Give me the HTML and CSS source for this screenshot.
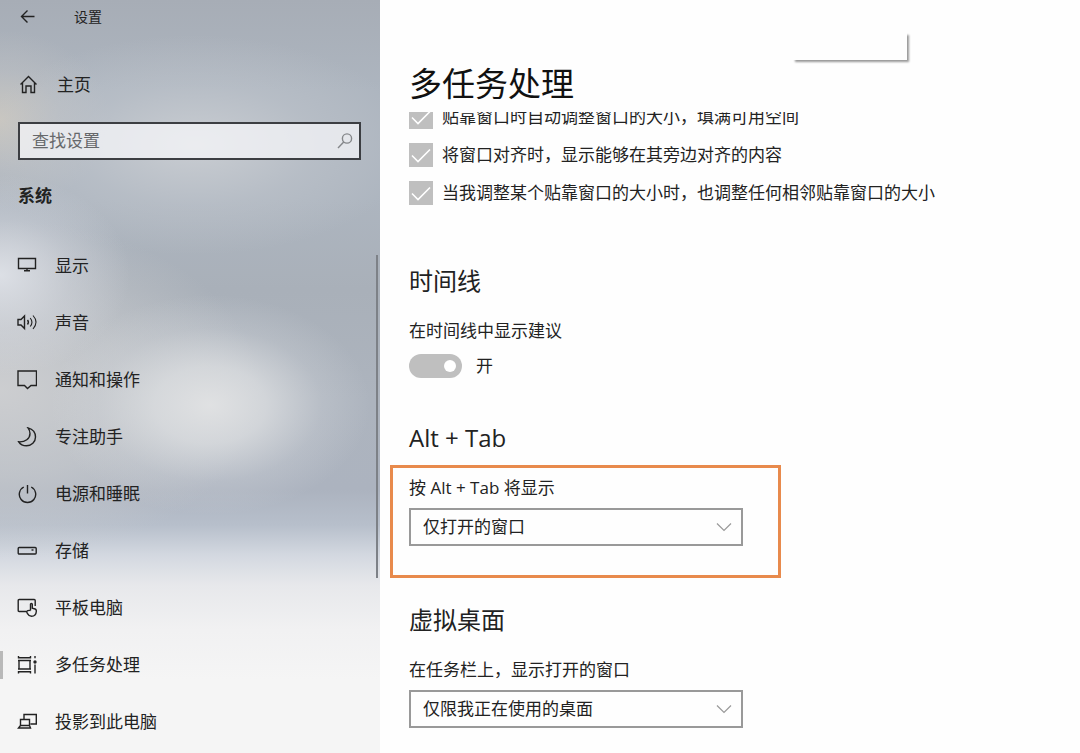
FILE: index.html
```html
<!DOCTYPE html>
<html lang="zh-CN">

<head>
  <meta charset="UTF-8">
  <meta name="viewport" content="width=device-width, initial-scale=1.0">
  <title>设置</title>
  <link rel="stylesheet" href="styles.css">
</head>

<body>
  <aside class="sidebar">
    <div class="titlebar">
      <button class="back-button" aria-label="返回">
        <svg class="icon" viewBox="0 0 20 20"><path d="M16.500 9.500H3.500M9.500 3.500l-6 6 6 6" /></svg>
      </button>
      <span class="titlebar-text">设置</span>
    </div>

    <a href="#" class="home-link">
      <svg class="icon" viewBox="0 0 20 20"><path d="M2.500 9.500L10.500 1.500l8 8M4.500 8v9.500H8V11h5v6.500h3.500V8" /></svg>
      <span>主页</span>
    </a>

    <div class="search-box">
      <input type="text" class="search-input" placeholder="查找设置" aria-label="查找设置">
      <svg class="search-icon" viewBox="0 0 18 18"><circle cx="12" cy="6.500" r="4.600" /><path d="M8.700 10L3 16" /></svg>
    </div>

    <h2 class="sidebar-title">系统</h2>

    <nav class="nav">
      <a href="#" class="nav-item">
        <svg class="icon" viewBox="0 0 20 20"><path d="M1.500 2.500h17v10h-17zM10 12.500v2M7 14.700h6" /></svg>
        <span>显示</span>
      </a>
      <a href="#" class="nav-item">
        <svg class="icon" viewBox="0 0 20 20"><path d="M1 6.500v5.500h3l3.500 3.500V3L4 6.500zM10.500 7q1.800 2.200 0 4.500" /><path class="thin" d="M13.200 5q3.500 4.200 0 8.500M16 2.500q6 6.500 0 13.500" /></svg>
        <span>声音</span>
      </a>
      <a href="#" class="nav-item">
        <svg class="icon" viewBox="0 0 20 20"><path d="M1 1h18.500v14.500H14L10.500 18.500 7.500 15.500H1z" /></svg>
        <span>通知和操作</span>
      </a>
      <a href="#" class="nav-item">
        <svg class="icon" viewBox="0 0 20 20"><path d="M11 .9c4.500 1.300 7.500 4.600 7.500 9.100 0 5-4 8.800-9 8.800-3.300 0-6.200-1.500-7.800-4 6.500.4 11.300-3 11.300-8.300 0-2.200-.8-4-2-5.600z" /></svg>
        <span>专注助手</span>
      </a>
      <a href="#" class="nav-item">
        <svg class="icon" viewBox="0 0 20 20"><path d="M6.800 3a8.200 8.200 0 1 0 7.400 0M10.500 1v8.500" /></svg>
        <span>电源和睡眠</span>
      </a>
      <a href="#" class="nav-item">
        <svg class="icon" viewBox="0 0 20 20"><rect x="1.200" y="6.500" width="18" height="6.500" rx="1" /><path d="M14.500 9h2" /></svg>
        <span>存储</span>
      </a>
      <a href="#" class="nav-item">
        <svg class="icon" viewBox="0 0 20 20"><path d="M9 13.500H2.200q-1 0-1-1v-10q0-1 1-1h15q1 0 1 1V8" /><path d="M13.500 12.500V6.200q.9-1.400 1.800 0v4l2.800.8q1.400.6 1.200 2.500-.3 4.800-4.800 4.800-2.600 0-4-2.600l-1-2.200q1.400-1.400 4-1" /></svg>
        <span>平板电脑</span>
      </a>
      <a href="#" class="nav-item active">
        <svg class="icon" viewBox="0 0 20 20"><path d="M2 5.500h11v8.500H2zM1.500 1v1.800h12V1M1.500 18.500v-1.800h12v1.800M18 1v2.200M18 9.500v9M1 5.500h13M1 14h13" /><circle class="dot" cx="18" cy="7" r="1" /></svg>
        <span>多任务处理</span>
      </a>
      <a href="#" class="nav-item">
        <svg class="icon" viewBox="0 0 20 20"><path d="M7 7V2.500h12.300v9.500H13.500M3.500 7.500h9v6h-9zM3.500 13.500L1.500 16h12l-1-2.500" /></svg>
        <span>投影到此电脑</span>
      </a>
    </nav>
    <div class="sidebar-scrollbar"></div>
  </aside>

  <main class="content">
    <h1 class="page-title">多任务处理</h1>
    <div class="popup-corner"></div>

    <div class="scroll-area">
      <div class="check-list">
        <label class="check-row">
          <input type="checkbox" checked>
          <span>贴靠窗口时自动调整窗口的大小，填满可用空间</span>
        </label>
        <label class="check-row">
          <input type="checkbox" checked>
          <span>将窗口对齐时，显示能够在其旁边对齐的内容</span>
        </label>
        <label class="check-row">
          <input type="checkbox" checked>
          <span>当我调整某个贴靠窗口的大小时，也调整任何相邻贴靠窗口的大小</span>
        </label>
      </div>

      <section class="section timeline">
        <h2>时间线</h2>
        <label class="setting-label" for="timelineToggle">在时间线中显示建议</label>
        <div class="toggle-row">
          <input type="checkbox" class="toggle" id="timelineToggle" checked>
          <span>开</span>
        </div>
      </section>

      <section class="section alt-tab">
        <h2>Alt + Tab</h2>
      </section>
      <div class="highlight">
        <label class="setting-label" for="altTab">按 Alt + Tab 将显示</label>
        <select id="altTab">
          <option>仅打开的窗口</option>
        </select>
      </div>

      <section class="section desktops">
        <h2>虚拟桌面</h2>
        <label class="setting-label" for="taskbarWindows">在任务栏上，显示打开的窗口</label>
        <select id="taskbarWindows">
          <option>仅限我正在使用的桌面</option>
        </select>
      </section>
    </div>
  </main>
</body>

</html>
```
FILE: styles.css
```css
* {
  box-sizing: border-box;
}

body {
  display: flex;
  height: 100vh;
  margin: 0;
  overflow: hidden;
  font-family: "Open Sans", "Noto Sans CJK SC", sans-serif;
  font-size: 17px;
  line-height: 24px;
  color: #222;
  background-color: #fefefe;
}

h1,
h2 {
  margin: 0;
  font-weight: 400;
}

a {
  color: inherit;
  text-decoration: none;
}

input,
select,
button {
  font: inherit;
  color: inherit;
}

/* Sidebar */
.sidebar {
  position: relative;
  flex: 0 0 380px;
  overflow: hidden;
  background:
    radial-gradient(ellipse 160px 110px at 210px 405px, rgba(226, 227, 228, 0.95), rgba(222, 224, 226, 0.75) 35%, rgba(216, 219, 223, 0.25) 70%, rgba(210, 214, 220, 0)),
    radial-gradient(ellipse 130px 100px at 0 275px, rgba(222, 225, 231, 0.95), rgba(216, 219, 226, 0.4) 55%, rgba(210, 214, 220, 0)),
    radial-gradient(ellipse 220px 110px at 195px 145px, rgba(206, 209, 213, 0.85), rgba(200, 204, 210, 0.35) 55%, rgba(190, 196, 204, 0)),
    radial-gradient(ellipse 110px 90px at 0 120px, rgba(204, 200, 192, 0.9), rgba(196, 196, 196, 0.4) 55%, rgba(186, 190, 196, 0)),
    radial-gradient(ellipse 260px 170px at 0 390px, rgba(206, 207, 209, 0.95), rgba(204, 206, 208, 0.6) 50%, rgba(196, 200, 206, 0)),
    linear-gradient(to bottom, #a7adb6 0, #adb5bf 90px, #adb5bf 200px, #a9b0b9 290px, #adb4be 400px, #acb3bf 490px, #b7bfcb 525px, #d3d8e0 555px, #e7e8eb 585px, #f1f1f2 630px, #f5f5f5 680px);
}

.titlebar {
  display: flex;
  align-items: center;
  gap: 36px;
  height: 34px;
  padding-left: 18px;
  font-size: 14px;
}

.back-button {
  display: flex;
  padding: 0;
  border: none;
  background: none;
}

.icon {
  flex: none;
  width: 20px;
  height: 20px;
  fill: none;
  stroke: #222;
  stroke-width: 1.4;
}

.icon .thin {
  stroke-width: 1.1;
}

.icon .dot {
  fill: #222;
}

.home-link {
  display: flex;
  align-items: center;
  gap: 19px;
  margin-top: 39px;
  padding-left: 18px;
}

.search-box {
  display: flex;
  align-items: center;
  height: 38px;
  margin: 25px 19px 0 18px;
  padding: 0 6px 0 12px;
  border: 2px solid #3c3e42;
  background-color: rgba(250, 250, 252, 0.7);
}

.search-input {
  flex: 1;
  min-width: 0;
  padding: 0;
  border: none;
  outline: none;
  background: none;
}

.search-input::placeholder {
  color: #66686b;
  opacity: 1;
}

.search-icon {
  width: 18px;
  height: 18px;
  fill: none;
  stroke: #85878a;
  stroke-width: 1.4;
}

.sidebar-title {
  margin: 24px 0 0 18px;
  font-size: 17px;
  font-weight: 700;
}

.nav {
  margin-top: 29px;
}

.nav-item {
  display: flex;
  align-items: center;
  gap: 18px;
  height: 57px;
  padding-left: 17px;
}

.nav-item.active {
  background: linear-gradient(#b9b9b9, #b9b9b9) left center / 3px 28px no-repeat;
}

.sidebar-scrollbar {
  position: absolute;
  top: 255px;
  right: 2px;
  width: 2px;
  height: 323px;
  background-color: #7d8187;
}

/* Content */
.content {
  position: relative;
  display: flex;
  flex: 1;
  flex-direction: column;
  min-width: 0;
  padding: 60px 10px 0;
}

.page-title {
  margin-bottom: 4px;
  padding: 0 19px;
  font-size: 33px;
  line-height: 48px;
  color: #111;
}

.popup-corner {
  position: absolute;
  top: 33px;
  left: 413px;
  width: 114px;
  height: 27px;
  background-color: #fefefe;
  box-shadow: 2px 2px 2px #999;
}

.scroll-area {
  flex: 1;
  min-height: 0;
  overflow: hidden;
}

/* the list is scrolled slightly under the page title */
.check-list {
  display: flex;
  flex-direction: column;
  gap: 14px;
  margin-top: -7px;
  padding: 0 19px;
}

.check-row {
  display: flex;
  align-items: center;
  gap: 9px;
  height: 24px;
}

.check-row input {
  appearance: none;
  flex: none;
  width: 24px;
  height: 24px;
  margin: 0;
  background: #bfbfbf url("data:image/svg+xml,%3Csvg xmlns='http://www.w3.org/2000/svg' viewBox='0 0 24 24'%3E%3Cpath d='M3 12.5l6 6L21 6.500' fill='none' stroke='white' stroke-width='1.6'/%3E%3C/svg%3E");
}

.section {
  padding: 0 19px;
}

.section h2 {
  font-size: 24px;
  line-height: 32px;
}

.timeline {
  margin-top: 60px;
}

.alt-tab {
  margin-top: 44px;
}

.desktops {
  margin-top: 26px;
}

.setting-label {
  display: block;
}

.section .setting-label {
  margin-top: 22px;
}

.toggle-row {
  display: flex;
  align-items: center;
  gap: 14px;
  margin-top: 11px;
}

.toggle {
  appearance: none;
  display: flex;
  align-items: center;
  justify-content: flex-end;
  width: 53px;
  height: 24px;
  margin: 0;
  padding-right: 6px;
  border-radius: 12px;
  background-color: #bfbfbf;
}

.toggle::before {
  content: "";
  width: 12px;
  height: 12px;
  border-radius: 50%;
  background-color: #fff;
}

.toggle:not(:checked) {
  justify-content: flex-start;
  padding-left: 6px;
}

.highlight {
  width: 391px;
  max-width: 100%;
  margin-top: 11px;
  padding: 8px 16px 29px;
  border: 3px solid #e88a4c;
}

select {
  appearance: none;
  display: block;
  width: 334px;
  max-width: 100%;
  height: 38px;
  margin-top: 8px;
  padding: 0 40px 0 12px;
  border: 2px solid #999;
  border-radius: 0;
  background: #fefefe url("data:image/svg+xml,%3Csvg xmlns='http://www.w3.org/2000/svg' viewBox='0 0 16 10'%3E%3Cpath d='M1 1.500l7 7 7-7' fill='none' stroke='%23999' stroke-width='1.2'/%3E%3C/svg%3E") right 9px center / 16px 10px no-repeat;
}
```
